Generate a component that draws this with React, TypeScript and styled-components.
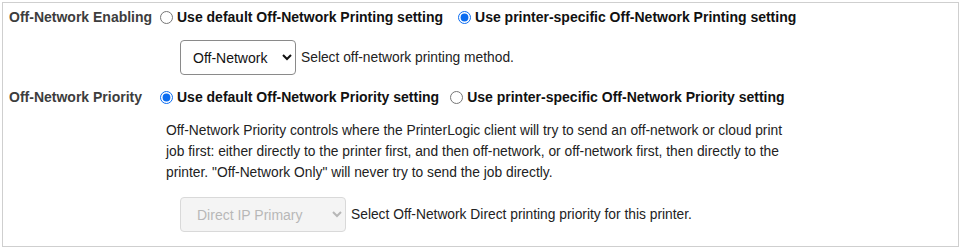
import React from 'react'
import styled, { createGlobalStyle } from 'styled-components'

const Global = createGlobalStyle`
  html, body { margin: 0; padding: 0; background: #fff; }
  body { font-family: "Liberation Sans", Arial, sans-serif; color: #222; }
`

const Panel = styled.div`
  margin: 2px 3px 3px 2px;
  border: 1px solid #cfcfcf;
  padding: 1px 6px 14px;
  display: grid;
  grid-template-columns: 150px 1fr;
`

const Label = styled.div<{ $top?: number }>`
  margin-top: ${p => p.$top ?? 0}px;
  font-size: 14px;
  font-weight: 700;
  color: #3d3d3d;
  padding-top: 4px;
  line-height: 18px;
  white-space: nowrap;
`

const Field = styled.div<{ $top?: number }>`
  margin-top: ${p => p.$top ?? 0}px;
  display: flex;
  flex-direction: column;
`

const Options = styled.div<{ $gap: number }>`
  display: flex;
  align-items: center;
  gap: ${p => p.$gap}px;
  height: 26px;
`

const Option = styled.label`
  display: flex;
  align-items: center;
  font-size: 14px;
  font-weight: 700;
  color: #111;
  white-space: nowrap;
  input { margin: 0 4px 0 1px; width: 13px; height: 13px; accent-color: #0b6cf0; }
`

const Help = styled.p`
  margin: 9.5px 0 0 7px;
  font-size: 13.8px;
  line-height: 21px;
  color: #222;
  max-width: 625px;
`

const SelectRow = styled.div<{ $top: number }>`
  display: flex;
  align-items: center;
  gap: 5px;
  margin: ${p => p.$top}px 0 0 21px;
  font-size: 13.8px;
  color: #222;
`

const Select = styled.select<{ $w: number }>`
  width: ${p => p.$w}px;
  height: 35px;
  border-radius: 4px;
  border: 1px solid ${p => (p.disabled ? '#c9c9c9' : '#8a8a8a')};
  background: ${p => (p.disabled ? '#f0f0f0' : '#fff')};
  color: ${p => (p.disabled ? '#9a9a9a' : '#111')};
  font-size: 14px;
  font-family: "Liberation Sans", Arial, sans-serif;
  padding: 0 6px 0 ${p => (p.disabled ? 12 : 8)}px;
`

export default function App() {
  return (
    <>
      <Global />
      <Panel>
        <Label>Off-Network Enabling</Label>
        <Field>
          <Options $gap={14}>
            <Option><input type="radio" name="en" />Use default Off-Network Printing setting</Option>
            <Option><input type="radio" name="en" defaultChecked />Use printer-specific Off-Network Printing setting</Option>
          </Options>
          <SelectRow $top={10}>
            <Select $w={116} defaultValue="off">
              <option value="off">Off-Network</option>
              <option value="direct">Direct IP</option>
            </Select>
            Select off-network printing method.
          </SelectRow>
        </Field>

        <Label $top={9}>Off-Network Priority</Label>
        <Field $top={9}>
          <Options $gap={10}>
            <Option><input type="radio" name="pr" defaultChecked />Use default Off-Network Priority setting</Option>
            <Option><input type="radio" name="pr" />Use printer-specific Off-Network Priority setting</Option>
          </Options>
          <Help>
            Off-Network Priority controls where the PrinterLogic client will try to send an off-network or cloud print
            job first: either directly to the printer first, and then off-network, or off-network first, then directly to the
            printer. "Off-Network Only" will never try to send the job directly.
          </Help>
          <SelectRow $top={14.5}>
            <Select $w={166} disabled defaultValue="dip">
              <option value="dip">Direct IP Primary</option>
            </Select>
            Select Off-Network Direct printing priority for this printer.
          </SelectRow>
        </Field>
      </Panel>
    </>
  )
}
